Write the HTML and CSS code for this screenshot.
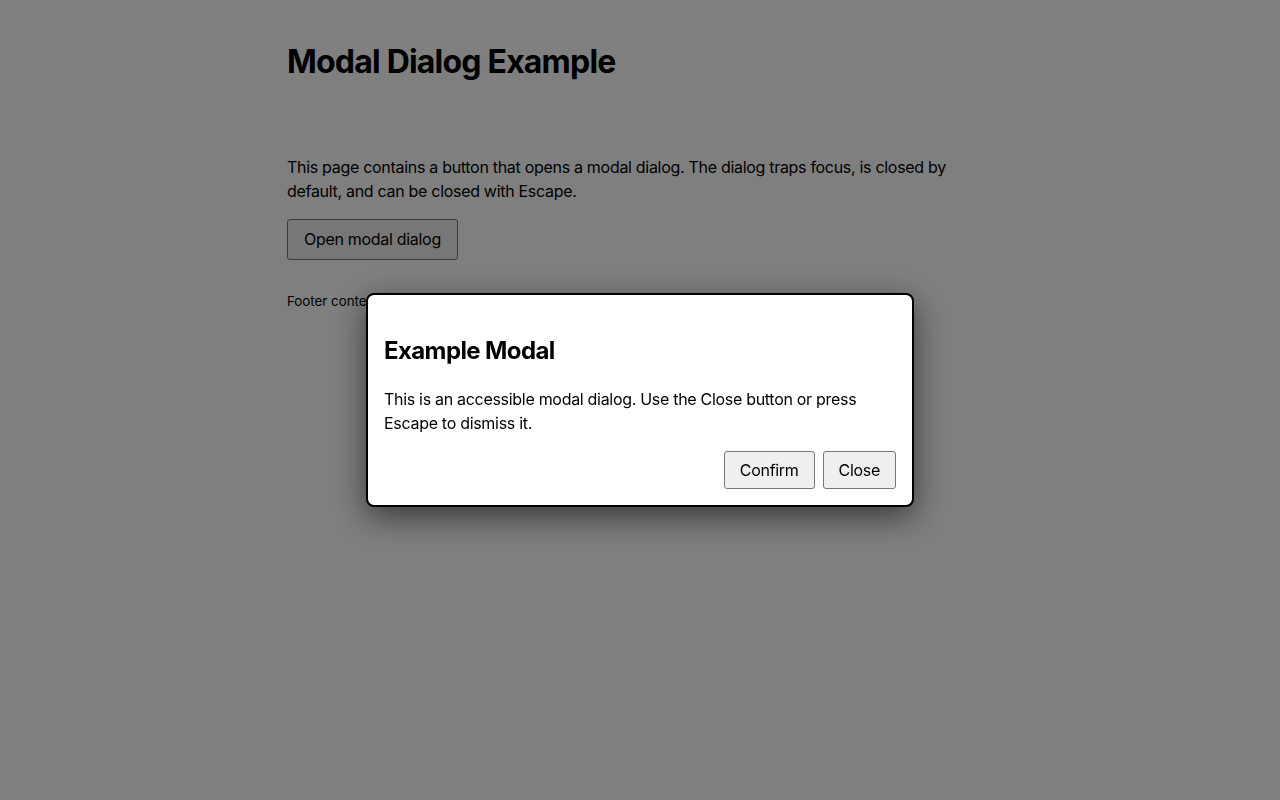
FILE: index.html
```html
<!DOCTYPE HTML>
<html>
<head>
	<title>Modal Dialog Example</title>
	<link rel="stylesheet" href="styles.css">
</head>
<body>
	<div class="page">
		<header class="cabecera">
			<h1>Modal Dialog Example</h1>
		</header>
		<main class="contenido">
			<p>This page contains a button that opens a modal dialog. The dialog traps focus, is closed by default, and can be closed with Escape.</p>
			<button type="button" class="boton boton-abrir">Open modal dialog</button>
		</main>
		<footer class="pie">Footer content</footer>
	</div>

	<div class="fondo-modal">
		<div class="modal" role="dialog" aria-modal="true" aria-labelledby="modal-titulo">
			<h2 id="modal-titulo">Example Modal</h2>
			<p>This is an accessible modal dialog. Use the Close button or press Escape to dismiss it.</p>
			<div class="modal-acciones">
				<button type="button" class="boton">Confirm</button>
				<button type="button" class="boton">Close</button>
			</div>
		</div>
	</div>
</body>
</html>
```

FILE: styles.css
```css
*, *::after, *::before{
	box-sizing: border-box;
}
html, body{
	width: 100%;
	height: 100%;
}
body{
	margin: 0;
	background-color: #fff;
	color: #000;
	font-family: Inter, "Noto Sans", sans-serif;
	font-size: 16px;
	line-height: 1.5;
	letter-spacing: -0.3px;
}
.page{
	width: 706px;
	margin: 0 auto;
	padding-top: 16px;
}
.cabecera h1{
	margin: 22px 0;
	font-size: 32px;
	font-weight: 700;
	line-height: 48px;
	letter-spacing: -0.8px;
}
.contenido{
	margin-top: 69px;
}
.contenido p{
	margin: 0 0 16px;
}
.boton{
	font: inherit;
	letter-spacing: -0.3px;
	color: #000;
	background-color: #efefef;
	border: 1px solid #767676;
	border-radius: 3px;
	padding: 6px 15px;
	line-height: 24px;
	cursor: pointer;
}
.boton-abrir{
	padding: 8px 16px;
	line-height: 23px;
}
.pie{
	margin-top: 31px;
	font-size: 13.33px;
	line-height: 20px;
	letter-spacing: 0;
}

/* capa oscura y ventana modal */
.fondo-modal{
	position: fixed;
	inset: 0;
	display: flex;
	align-items: center;
	justify-content: center;
	background-color: rgba(0, 0, 0, 0.5);
}
.modal{
	width: 548px;
	padding: 16px;
	background-color: #fff;
	border: 2px solid #000;
	border-radius: 8px;
	box-shadow: 0 10px 32px rgba(0, 0, 0, 0.55);
}
.modal h2{
	margin: 22px 0 18px;
	font-size: 24px;
	line-height: 36px;
	font-weight: 700;
	letter-spacing: -0.6px;
}
.modal p{
	margin: 0 0 16px;
}
.modal-acciones{
	display: flex;
	justify-content: flex-end;
	gap: 8px;
}
```
